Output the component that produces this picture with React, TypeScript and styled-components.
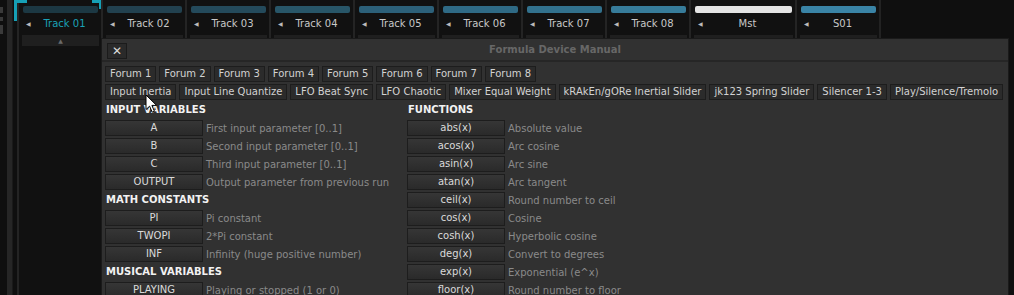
import React from 'react';
import styled, {createGlobalStyle} from "styled-components";

const GlobalStyle = createGlobalStyle`
    body {
        margin: 0;
        background: #0f0f0f;
        font-family: "DejaVu Sans", "Liberation Sans", sans-serif;
    }
`

const tracks = [
    {name: "Track 01", color: "#1c3843", selected: true},
    {name: "Track 02", color: "#22414f"},
    {name: "Track 03", color: "#244a5b"},
    {name: "Track 04", color: "#285668"},
    {name: "Track 05", color: "#2c6079"},
    {name: "Track 06", color: "#2f6a85"},
    {name: "Track 07", color: "#32718d"},
    {name: "Track 08", color: "#377c9a"},
    {name: "Mst", color: "#e4e4e4", wide: true},
    {name: "S01", color: "#3a84a6"},
]

const forums = ["Forum 1", "Forum 2", "Forum 3", "Forum 4", "Forum 5", "Forum 6", "Forum 7", "Forum 8"]

const presets = [
    "Input Inertia", "Input Line Quantize", "LFO Beat Sync", "LFO Chaotic", "Mixer Equal Weight",
    "kRAkEn/gORe Inertial Slider", "jk123 Spring Slider", "Silencer 1-3", "Play/Silence/Tremolo"
]

type Entry = { header?: string, key?: string, text?: string }

const variables: Entry[] = [
    {header: "INPUT VARIABLES"},
    {key: "A", text: "First input parameter [0..1]"},
    {key: "B", text: "Second input parameter [0..1]"},
    {key: "C", text: "Third input parameter [0..1]"},
    {key: "OUTPUT", text: "Output parameter from previous run"},
    {header: "MATH CONSTANTS"},
    {key: "PI", text: "Pi constant"},
    {key: "TWOPI", text: "2*Pi constant"},
    {key: "INF", text: "Infinity (huge positive number)"},
    {header: "MUSICAL VARIABLES"},
    {key: "PLAYING", text: "Playing or stopped (1 or 0)"},
]

const functions: Entry[] = [
    {header: "FUNCTIONS"},
    {key: "abs(x)", text: "Absolute value"},
    {key: "acos(x)", text: "Arc cosine"},
    {key: "asin(x)", text: "Arc sine"},
    {key: "atan(x)", text: "Arc tangent"},
    {key: "ceil(x)", text: "Round number to ceil"},
    {key: "cos(x)", text: "Cosine"},
    {key: "cosh(x)", text: "Hyperbolic cosine"},
    {key: "deg(x)", text: "Convert to degrees"},
    {key: "exp(x)", text: "Exponential (e^x)"},
    {key: "floor(x)", text: "Round number to floor"},
]

const Section = ({items}: { items: Entry[] }) => (
    <List>
        {items.map((item, i) => item.header
            ? <Header key={i}>{item.header}</Header>
            : <Row key={i}>
                <KeyButton>{item.key}</KeyButton>
                <Description>{item.text}</Description>
            </Row>)}
    </List>
)

export default function App() {
    return (
        <>
            <GlobalStyle/>
            <Screen>
                <LeftRail>
                    <EdgeTabs>
                        <EdgeTab $h={6}/>
                        <EdgeTab $h={4}/>
                        <EdgeTab $h={9}/>
                    </EdgeTabs>
                    <RailBar/>
                </LeftRail>
                <TrackStrip>
                    {tracks.map((t, i) => (
                        <TrackColumn key={i} $wide={t.wide}>
                            {t.selected && <>
                                <BracketLeft/>
                                <BracketRight/>
                            </>}
                            <ColorBar $color={t.color}/>
                            <NameRow>
                                <Arrow>◀</Arrow>
                                <TrackName $selected={t.selected}>{t.name}</TrackName>
                            </NameRow>
                            <FoldBox>{t.selected ? "▲" : ""}</FoldBox>
                        </TrackColumn>
                    ))}
                </TrackStrip>

                <Dialog>
                    <TitleBar>
                        <CloseButton>✕</CloseButton>
                        <Title>Formula Device Manual</Title>
                    </TitleBar>
                    <Body>
                        <TabRow>
                            {forums.map(f => <Tab key={f}>{f}</Tab>)}
                        </TabRow>
                        <TabRow>
                            {presets.map(p => <Tab key={p}>{p}</Tab>)}
                        </TabRow>
                        <Columns>
                            <Section items={variables}/>
                            <Section items={functions}/>
                        </Columns>
                    </Body>
                </Dialog>

                <Cursor width="14" height="20" viewBox="0 0 14 20">
                    <path d="M1 1 L1 15.5 L4.6 12.2 L7.2 18.2 L9.4 17.2 L6.9 11.4 L11.6 11.4 Z"
                          fill="#fff" stroke="#000" strokeWidth="1" strokeLinejoin="round"/>
                </Cursor>
            </Screen>
        </>
    );
}

const Screen = styled.div`
    position: relative;
    display: flex;
    width: 1014px;
    height: 295px;
    overflow: hidden;
    background: #0f0f0f;
`

const LeftRail = styled.div`
    display: flex;
    width: 17px;
    flex-shrink: 0;
`

const EdgeTabs = styled.div`
    display: flex;
    flex-direction: column;
    gap: 4px;
    width: 3px;
    padding-top: 7px;
`

const EdgeTab = styled.div<{ $h: number }>`
    height: ${p => p.$h}px;
    background: #3a3a3a;
`

const RailBar = styled.div`
    width: 5px;
    margin-left: 4px;
    background: #262626;
    border-right: 1px solid #1a1a1a;
`

const TrackStrip = styled.div`
    display: flex;
    align-items: stretch;
    border-right: 2px solid #222;
    height: 38px;
`

const TrackColumn = styled.div<{ $wide?: boolean }>`
    position: relative;
    display: flex;
    flex-direction: column;
    width: ${p => p.$wide ? 102 : 80}px;
    height: 295px;
    border-left: 2px solid #242424;
    background: #111;
    padding: 6px 0 0 2px;
    box-sizing: content-box;
`

const BracketLeft = styled.div`
    position: absolute;
    left: -5px;
    top: 0;
    width: 13px;
    height: 21px;
    border-top: 3px solid #16a0b6;
    border-left: 3px solid #16a0b6;
    box-sizing: border-box;
`

const BracketRight = styled.div`
    position: absolute;
    right: -1px;
    top: 0;
    width: 10px;
    height: 9px;
    border-top: 3px solid #16a0b6;
    border-right: 3px solid #16a0b6;
    box-sizing: border-box;
`

const ColorBar = styled.div<{ $color: string }>`
    height: 7px;
    margin: 0 3px 0 2px;
    border-radius: 2px;
    background: ${p => p.$color};
`

const NameRow = styled.div`
    display: flex;
    align-items: center;
    height: 18px;
    margin-top: 1px;
    padding: 0 6px 0 5px;
`

const Arrow = styled.span`
    width: 8px;
    font-size: 6px;
    color: #bbb;
`

const TrackName = styled.span<{ $selected?: boolean }>`
    flex: 1;
    text-align: center;
    font-size: 10px;
    color: ${p => p.$selected ? "#1aa2b7" : "#c8c8c8"};
`

const FoldBox = styled.div`
    height: 11px;
    margin: 3px 2px 0 1px;
    background: #1f1f1f;
    color: #6a6a6a;
    font-size: 6px;
    line-height: 11px;
    text-align: center;
`

const Dialog = styled.section`
    position: absolute;
    left: 102px;
    top: 39px;
    width: 906px;
    height: 270px;
    background: #313131;
    box-shadow: 0 0 0 1px #1a1a1a;
`

const TitleBar = styled.div`
    position: relative;
    display: flex;
    align-items: center;
    justify-content: center;
    height: 21px;
    border-bottom: 2px solid #262626;
`

const CloseButton = styled.button`
    position: absolute;
    left: 5px;
    top: 4px;
    width: 20px;
    height: 16px;
    padding: 0;
    border: 1px solid #1b1b1b;
    background: #2a2a2a;
    color: #dcdcdc;
    font-size: 12px;
    line-height: 14px;
    font-family: "DejaVu Sans", sans-serif;
`

const Title = styled.span`
    font-size: 10px;
    font-weight: 700;
    color: #676767;
`

const Body = styled.div`
    display: flex;
    flex-direction: column;
    gap: 2px;
    padding: 4px 3px 0;
`

const TabRow = styled.div`
    display: flex;
    gap: 3px;
`

const Tab = styled.div`
    height: 14px;
    padding: 0 4px;
    border: 1px solid #1d1d1d;
    background: #2b2b2b;
    color: #d2d2d2;
    font-size: 10px;
    line-height: 14px;
    white-space: nowrap;
`

const Columns = styled.div`
    display: grid;
    grid-template-columns: 300px 1fr;
    column-gap: 2px;
    margin-top: -1px;
`

const List = styled.div`
    display: flex;
    flex-direction: column;
`

const Header = styled.div`
    height: 18px;
    padding-left: 1px;
    color: #f2f2f2;
    font-size: 10px;
    font-weight: 700;
    line-height: 18px;
`

const Row = styled.div`
    display: flex;
    align-items: center;
    gap: 3px;
    height: 18px;
`

const KeyButton = styled.div`
    width: 96px;
    height: 14px;
    border: 1px solid #1d1d1d;
    background: linear-gradient(#363636, #2a2a2a);
    color: #dadada;
    font-size: 10px;
    line-height: 14px;
    text-align: center;
`

const Description = styled.span`
    color: #8a8a8a;
    font-size: 10px;
    white-space: nowrap;
`

const Cursor = styled.svg`
    position: absolute;
    left: 145px;
    top: 94px;
`
